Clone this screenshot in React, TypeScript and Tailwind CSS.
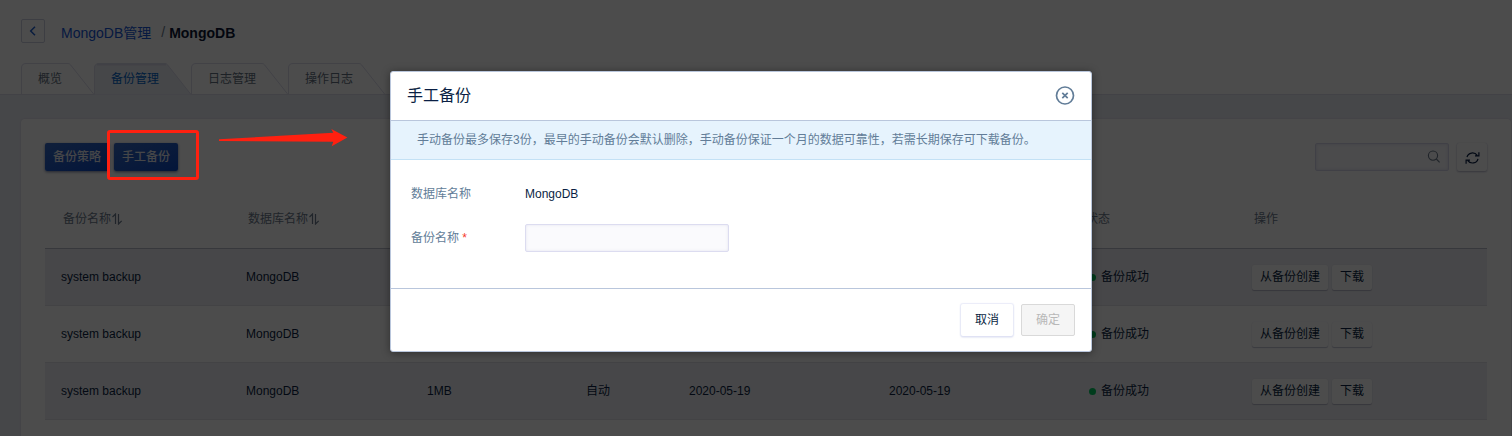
import React from "react";

type Tab = { label: string; width: number; active?: boolean };

const tabs: Tab[] = [
  { label: "概览", width: 73 },
  { label: "备份管理", width: 97, active: true },
  { label: "日志管理", width: 97 },
  { label: "操作日志", width: 97 },
];

const rows = [0, 1, 2];

const columns =
  "grid grid-cols-[185px_181px_159px_103px_200px_200px_163px_1fr] items-center pl-4";

function TabItem({ label, width, active }: Tab) {
  const w = width;
  const outline = `M0.5 31.5 V5 Q0.5 0.5 5 0.5 H${w - 26} Q${w - 24.5} 0.5 ${w - 23.5} 1.8 L${w} 31.5`;
  return (
    <div className="relative h-8 pt-2 pl-[17px]" style={{ width: w }}>
      <svg className="absolute top-0 left-0 overflow-visible" width={w} height={32} fill="none">
        <path d={outline} fill={active ? "#eceef5" : "none"} stroke="#dcdcec" />
        {active && <path d={`M3 1.5 H${w - 25}`} stroke="#dadbea" strokeWidth="2" />}
      </svg>
      <span className={active ? "relative text-[#0064c8]" : "relative text-[#627080]"}>{label}</span>
    </div>
  );
}

function SortIcon() {
  return (
    <svg width="11" height="12" viewBox="0 0 11 12" fill="none" stroke="currentColor" strokeWidth="1.2">
      <path d="M0.5 4 L3.5 1 V11 M6.5 1 V11 L9.7 7.8" />
    </svg>
  );
}

function SmallButton({ children }: { children?: React.ReactNode }) {
  return (
    <button className="h-[25px] rounded-xs bg-white px-2 leading-[25px] shadow-[0_0_1px_rgba(120,120,170,0.2),0_1px_1px_rgba(80,85,130,0.35)]">
      {children}
    </button>
  );
}

function PrimaryButton({ children }: { children: React.ReactNode }) {
  return (
    <button className="h-7 w-16 rounded-xs bg-linear-to-br from-[#3568c4] to-[#0a48c4] font-medium text-[#e6e9f2] shadow-[0_1px_3px_rgba(20,40,100,0.6)]">
      {children}
    </button>
  );
}

function Page() {
  return (
    <div className="flex h-full flex-col bg-[#eceef5]">
      <header className="flex h-[95px] shrink-0 flex-col justify-between border-b border-[#dcdcec] bg-white pl-[21px]">
        <div className="flex items-center pt-[19px] text-sm">
          <div className="flex h-6 w-6 items-center justify-center rounded-xs border border-[#ccd0e0]">
            <svg width="8" height="10" viewBox="0 0 8 10" fill="none" stroke="#2060d0" strokeWidth="1.5">
              <path d="M6 0.8 L1.7 5 L6 9.2" />
            </svg>
          </div>
          <span className="mt-[3px] ml-4 text-[#1456d8]">MongoDB管理</span>
          <span className="mt-[1px] ml-[10px] text-[#6b7a8c]">/</span>
          <span className="mt-[3px] ml-1 font-bold text-[#0a1633]">MongoDB</span>
        </div>
        <nav className="-mb-px flex">
          {tabs.map((t) => (
            <TabItem key={t.label} {...t} />
          ))}
        </nav>
      </header>
      <main className="mt-6 mr-px ml-[21px] h-[400px] shrink-0 rounded-sm bg-white px-6 pt-6 shadow-[0_0_2px_rgba(80,80,130,0.2)]">
        <div className="flex h-7 items-center justify-between">
          <div className="flex gap-[5px]">
            <PrimaryButton>备份策略</PrimaryButton>
            <PrimaryButton>手工备份</PrimaryButton>
          </div>
          <div className="flex items-center gap-2">
            <div className="flex h-7 w-[134px] items-center justify-end rounded-xs border border-[#d8d8ec] bg-[#fafafd] pr-2 shadow-[inset_0_0_3px_rgba(100,100,170,0.2)]">
              <svg className="-mt-0.5" width="13" height="13" viewBox="0 0 13 13" fill="none" stroke="#6b7a8c" strokeWidth="1.1">
                <circle cx="6" cy="5.6" r="4.6" />
                <path d="M9.3 9 L12.6 12.4" />
              </svg>
            </div>
            <div className="flex h-7 w-[30px] items-center justify-center rounded-xs bg-white shadow-[0_0_1px_rgba(110,110,160,0.3),0_1px_2px_rgba(80,80,130,0.4)]">
              <svg className="mt-0.5" width="15" height="14" viewBox="0 0 15 14" fill="none" stroke="#0a1f44" strokeWidth="1.2">
                <path d="M2 6 A5.6 5.2 0 0 1 12.2 4.4 M13.9 1.2 V4.8 H10 M13 7.8 A5.6 5.2 0 0 1 2.8 9.6 M1.1 12.8 V9.2 H5" />
              </svg>
            </div>
          </div>
        </div>
        <div className="mt-[19px]">
          <div className={`${columns} h-[59px] border-b border-[#b8bcca] text-[#6b7a8c]`}>
            <span className="flex items-center gap-px pl-0.5">备份名称<SortIcon /></span>
            <span className="flex items-center gap-px pl-0.5">数据库名称<SortIcon /></span>
            <span>备份大小</span>
            <span>类型</span>
            <span>开始时间</span>
            <span>结束时间</span>
            <span className="-ml-[3px]">状态</span>
            <span className="pl-0.5">操作</span>
          </div>
          {rows.map((i) => (
            <div
              key={i}
              className={`${columns} h-[57px] border-b border-[#dfdfe8] text-[#0a1f44] ${i % 2 === 0 ? "bg-[#efeff4]" : "bg-white"}`}
            >
              <span>system backup</span>
              <span>MongoDB</span>
              <span>1MB</span>
              <span>自动</span>
              <span>2020-05-19</span>
              <span>2020-05-19</span>
              <span className="flex items-center gap-[5px]">
                <i className="h-[7px] w-[7px] rounded-full bg-[#00c860]" />
                备份成功
              </span>
              <span className="flex gap-1">
                <SmallButton>从备份创建</SmallButton>
                <SmallButton>下载</SmallButton>
              </span>
            </div>
          ))}
        </div>
      </main>
    </div>
  );
}

function Dialog() {
  return (
    <section className="absolute top-[71px] left-[390px] flex h-[281px] w-[702px] flex-col rounded-[3px] border border-[#b9c6dc] bg-white text-[#0a1f44] shadow-[0_1px_8px_rgba(0,0,0,0.4)]">
      <div className="flex h-[49px] shrink-0 items-center justify-between border-b border-[#b9c6dc] pr-4 pl-4">
        <h2 className="text-base">手工备份</h2>
        <svg width="20" height="20" viewBox="0 0 20 20" fill="none" stroke="#627d98" strokeWidth="1.7">
          <circle cx="10" cy="9.5" r="8.5" />
          <path d="M7.3 6.8 L12.7 12.2 M12.7 6.8 L7.3 12.2" />
        </svg>
      </div>
      <div className="flex h-[39px] shrink-0 items-center border-b border-[#c3e1f5] bg-[#e6f3fd] pl-[26px] text-[#627d98]">
        手动备份最多保存3份，最早的手动备份会默认删除，手动备份保证一个月的数据可靠性，若需长期保存可下载备份。
      </div>
      <div className="flex grow flex-col pt-5 pl-5">
        <div className="flex h-7 items-center">
          <span className="w-[114px] text-[#627d98]">数据库名称</span>
          <span>MongoDB</span>
        </div>
        <div className="mt-4 flex h-7 items-center">
          <span className="w-[114px] text-[#627d98]">
            备份名称 <span className="text-[#f5392b]">*</span>
          </span>
          <span className="h-7 w-[204px] rounded-xs border border-[#dcdcf0] bg-[#fafafd] shadow-[inset_0_0_3px_rgba(100,100,170,0.15)]" />
        </div>
      </div>
      <div className="flex h-[63px] shrink-0 items-center justify-end gap-2 border-t border-[#b9c6dc] pr-4">
        <button className="h-8 w-[52px] rounded-xs bg-white shadow-[0_0_1px_1px_rgba(230,233,247,0.8),0_1px_2px_rgba(150,160,210,0.6)]">
          取消
        </button>
        <button className="h-8 w-[54px] rounded-xs border border-[#d9d9d9] bg-[#f5f5f5] text-[#b8b8b8]">
          确定
        </button>
      </div>
    </section>
  );
}

export default function App() {
  return (
    <div className="relative h-[436px] w-[1512px] overflow-hidden font-['Liberation_Sans','Noto_Sans_CJK_SC',sans-serif] text-xs">
      <Page />
      <div className="absolute inset-0 bg-black/70" />
      <Dialog />
      <div className="absolute top-[130px] left-[107px] h-[50px] w-[92px] rounded-[3px] border-3 border-[#ff2010]" />
      <svg className="absolute top-[128px] left-[218px]" width="131" height="20" viewBox="218 128 131 20">
        <path d="M219 139.3 L333.3 132.7 L331.3 129 L347.4 137.5 L331.7 146.3 L333.3 141.7 L219 141 Z" fill="#ff2010" />
      </svg>
    </div>
  );
}
